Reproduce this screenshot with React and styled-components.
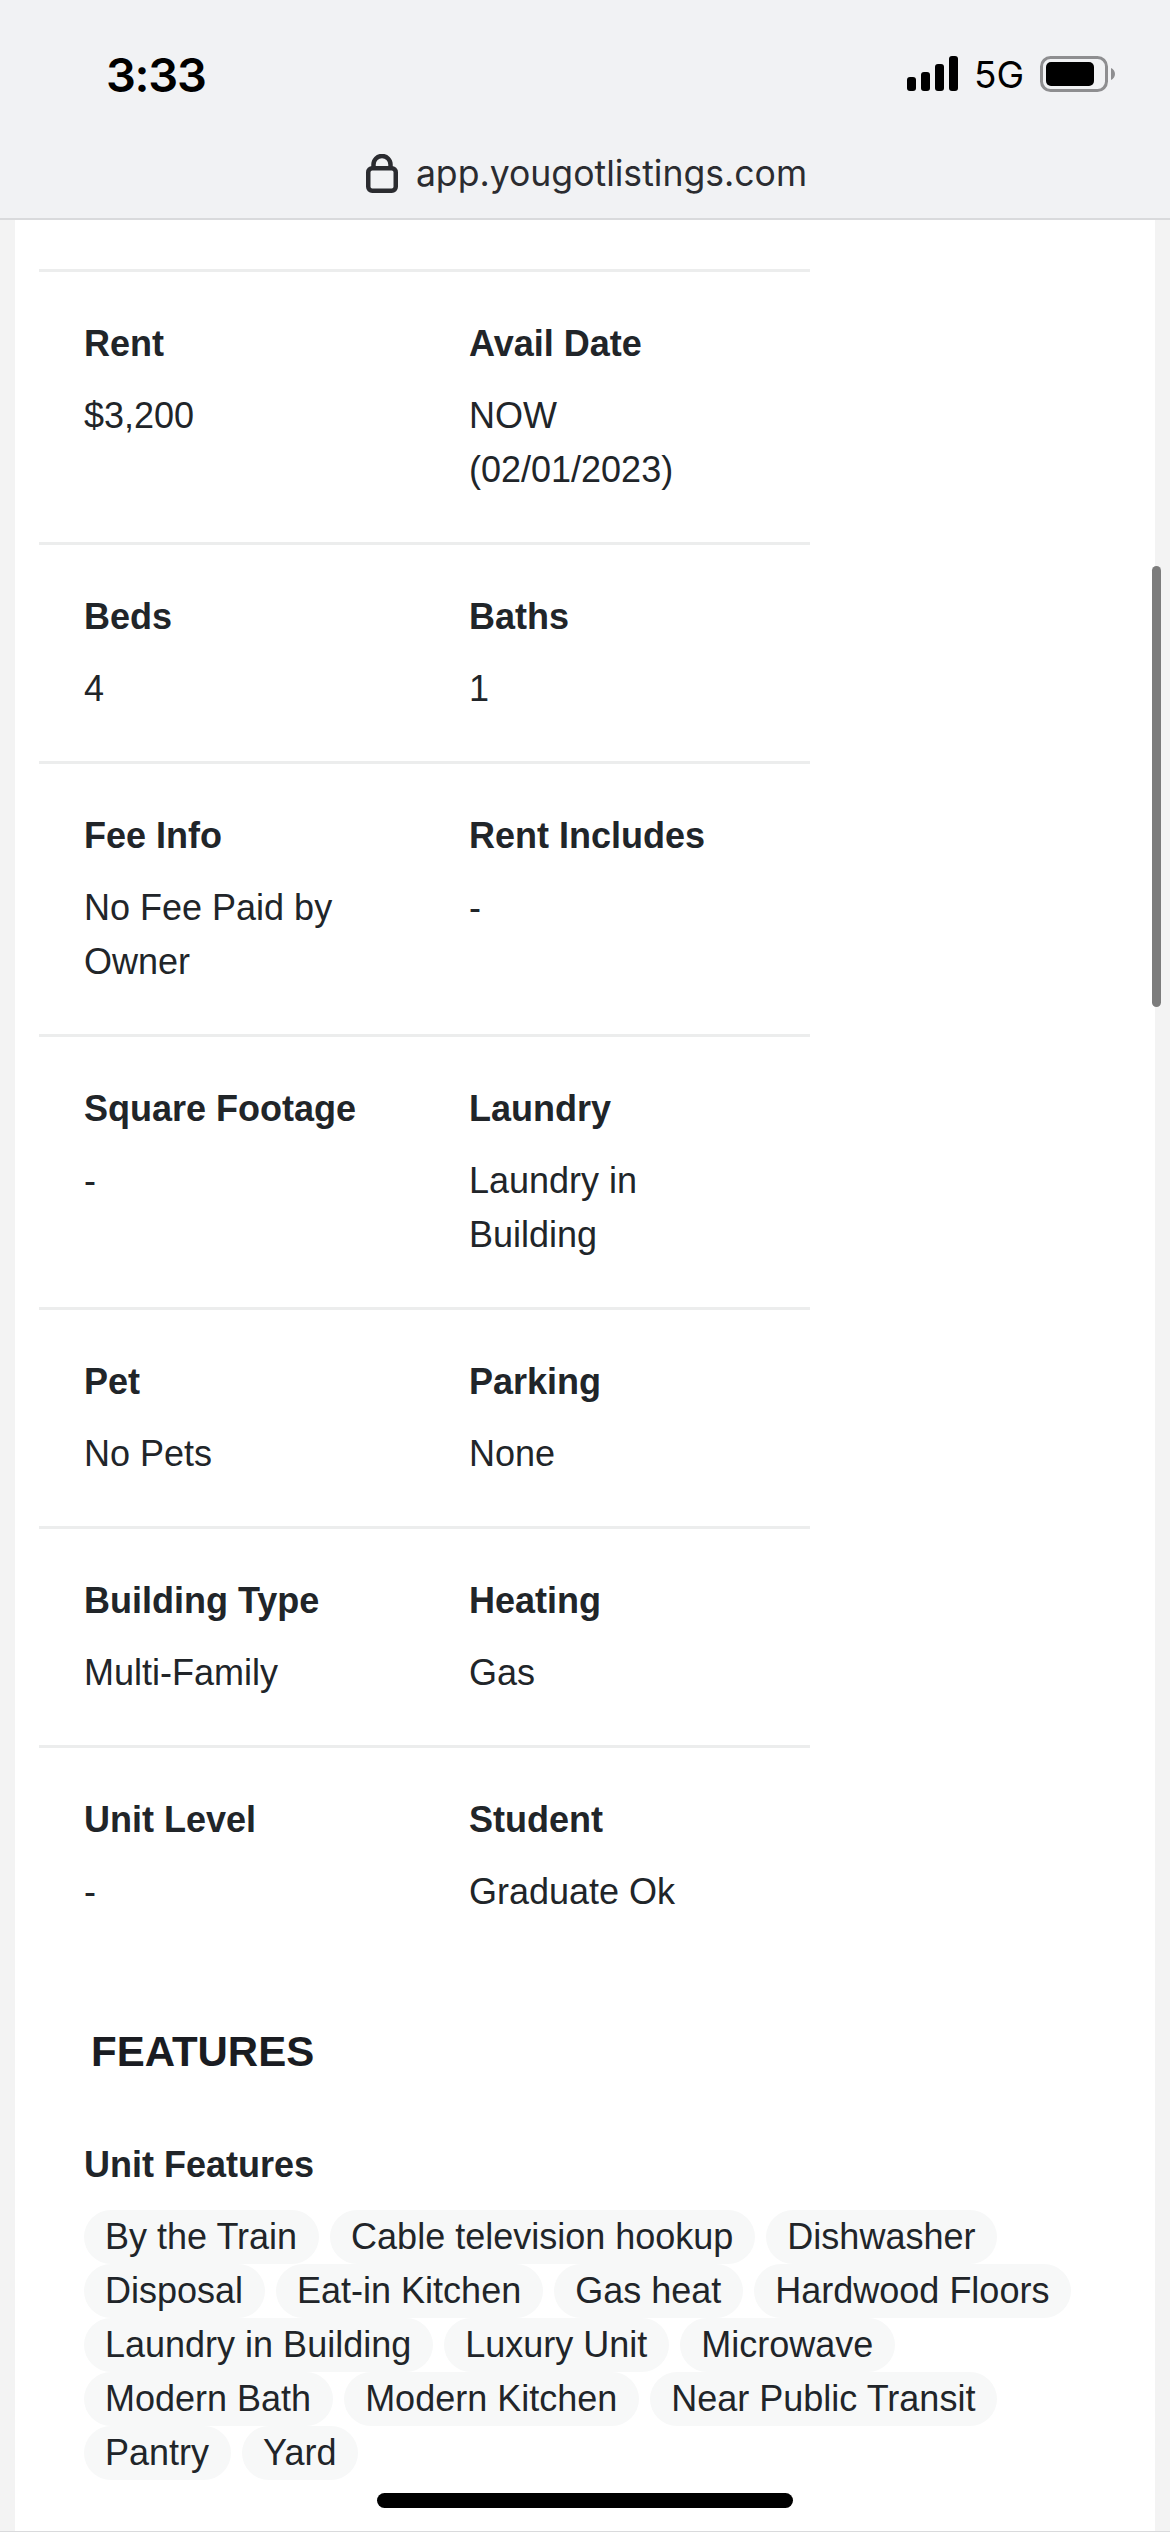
import React from 'react';
import styled, {createGlobalStyle} from 'styled-components';

const GlobalStyle = createGlobalStyle`
  html, body {
    margin: 0;
    padding: 0;
    background: #f3f3f3;
  }
  * {
    box-sizing: border-box;
  }
`;

const Page = styled.div`
  border-bottom: 1px solid #d9dadc;
  color: #212529;
  font-family: "Liberation Sans", Arial, sans-serif;
  height: 2532px;
  overflow: hidden;
  position: relative;
  width: 1170px;
`;

const Header = styled.header`
  background: #f1f2f4;
  border-bottom: 2px solid #d9dadc;
  height: 220px;
`;

const StatusBar = styled.div`
  align-items: center;
  display: flex;
  height: 148px;
  justify-content: space-between;
  padding: 0 55px 0 106px;
`;

const Time = styled.div`
  color: #000;
  font-family: Inter, sans-serif;
  font-size: 47px;
  font-weight: 600;
  letter-spacing: -1.3px;
`;

const StatusRight = styled.div`
  align-items: center;
  display: flex;
`;

const Network = styled.span`
  color: #000;
  font-family: Inter, sans-serif;
  font-size: 37px;
  font-weight: 400;
  margin: 0 16px 0 16px;
`;

const AddressBar = styled.div`
  align-items: center;
  display: flex;
  gap: 18px;
  justify-content: center;
  padding: 4px 0 0 3px;
`;

const Url = styled.span`
  color: #2b2c30;
  font-family: Inter, sans-serif;
  font-size: 35.6px;
`;

const Card = styled.main`
  background: #fff;
  height: 2312px;
  margin: 0 15px;
  padding: 49px 0 0 24px;
`;

const Table = styled.div`
  width: 771px;
`;

const Row = styled.div`
  border-top: 3px solid #eceded;
  display: grid;
  grid-template-columns: 385px 1fr;
  padding: 45px 0 45px 45px;
`;

const Label = styled.div`
  font-size: 36px;
  font-weight: 700;
  line-height: 54px;
  margin-bottom: 18px;
`;

const Value = styled.div`
  font-size: 36px;
  line-height: 54px;
  max-width: 285px;
`;

const Section = styled.h2`
  color: #1a1c22;
  font-size: 42px;
  font-weight: 700;
  line-height: 50px;
  margin: 63px 0 0 52px;
`;

const SubHeading = styled.h3`
  font-size: 36px;
  font-weight: 700;
  line-height: 53px;
  margin: 61px 0 19px 45px;
`;

const Chips = styled.div`
  column-gap: 11px;
  display: flex;
  flex-wrap: wrap;
  margin-left: 45px;
  width: 1060px;
`;

const Chip = styled.span`
  background: #f7f8f8;
  border-radius: 27px;
  font-size: 36px;
  line-height: 54px;
  padding: 0 22px 0 21px;
`;

const ScrollThumb = styled.div`
  background: #7c7c7c;
  border-radius: 5px;
  height: 441px;
  position: absolute;
  right: 9px;
  top: 566px;
  width: 9px;
`;

const HomeIndicator = styled.div`
  background: #000;
  border-radius: 8px;
  bottom: 23px;
  height: 15px;
  left: 377px;
  position: absolute;
  width: 416px;
`;

const rows = [
  [['Rent', '$3,200'], ['Avail Date', 'NOW (02/01/2023)']],
  [['Beds', '4'], ['Baths', '1']],
  [['Fee Info', 'No Fee Paid by Owner'], ['Rent Includes', '-']],
  [['Square Footage', '-'], ['Laundry', 'Laundry in Building']],
  [['Pet', 'No Pets'], ['Parking', 'None']],
  [['Building Type', 'Multi-Family'], ['Heating', 'Gas']],
  [['Unit Level', '-'], ['Student', 'Graduate Ok']]
];

const features = [
  'By the Train', 'Cable television hookup', 'Dishwasher', 'Disposal', 'Eat-in Kitchen',
  'Gas heat', 'Hardwood Floors', 'Laundry in Building', 'Luxury Unit', 'Microwave',
  'Modern Bath', 'Modern Kitchen', 'Near Public Transit', 'Pantry', 'Yard'
];

const SignalIcon = () => (
  <svg width="51" height="36" viewBox="0 0 51 36">
    <rect x="0" y="21" width="9" height="14" rx="3" />
    <rect x="14" y="16" width="9" height="19" rx="3" />
    <rect x="28" y="8" width="9" height="27" rx="3" />
    <rect x="42" y="0" width="9" height="35" rx="3" />
  </svg>
);

const BatteryIcon = () => (
  <svg width="75" height="36" viewBox="0 0 75 36">
    <rect x="1.5" y="1.5" width="65" height="33" rx="9" fill="none" stroke="#8e8e90" strokeWidth="3" />
    <rect x="6" y="6" width="48" height="24" rx="5" />
    <path d="M71 12c2.500 1 4 3.500 4 6s-1.500 5-4 6z" fill="#8e8e90" />
  </svg>
);

const LockIcon = () => (
  <svg width="32" height="39" viewBox="0 0 32 39" fill="none" stroke="#2b2c30" strokeWidth="4.500">
    <rect x="2.250" y="14.250" width="27.500" height="22.500" rx="4" />
    <path d="M7.500 14V10.500a8.500 8.500 0 0 1 17 0V14" />
  </svg>
);

export default function App() {
  return (
    <Page>
      <GlobalStyle />
      <Header>
        <StatusBar>
          <Time>3:33</Time>
          <StatusRight>
            <SignalIcon />
            <Network>5G</Network>
            <BatteryIcon />
          </StatusRight>
        </StatusBar>
        <AddressBar>
          <LockIcon />
          <Url>app.yougotlistings.com</Url>
        </AddressBar>
      </Header>
      <Card>
        <Table>
          {rows.map(row => (
            <Row key={row[0][0]}>
              {row.map(([label, value]) => (
                <div key={label}>
                  <Label>{label}</Label>
                  <Value>{value}</Value>
                </div>
              ))}
            </Row>
          ))}
        </Table>
        <Section>FEATURES</Section>
        <SubHeading>Unit Features</SubHeading>
        <Chips>
          {features.map(feature => <Chip key={feature}>{feature}</Chip>)}
        </Chips>
      </Card>
      <ScrollThumb />
      <HomeIndicator />
    </Page>
  );
}
